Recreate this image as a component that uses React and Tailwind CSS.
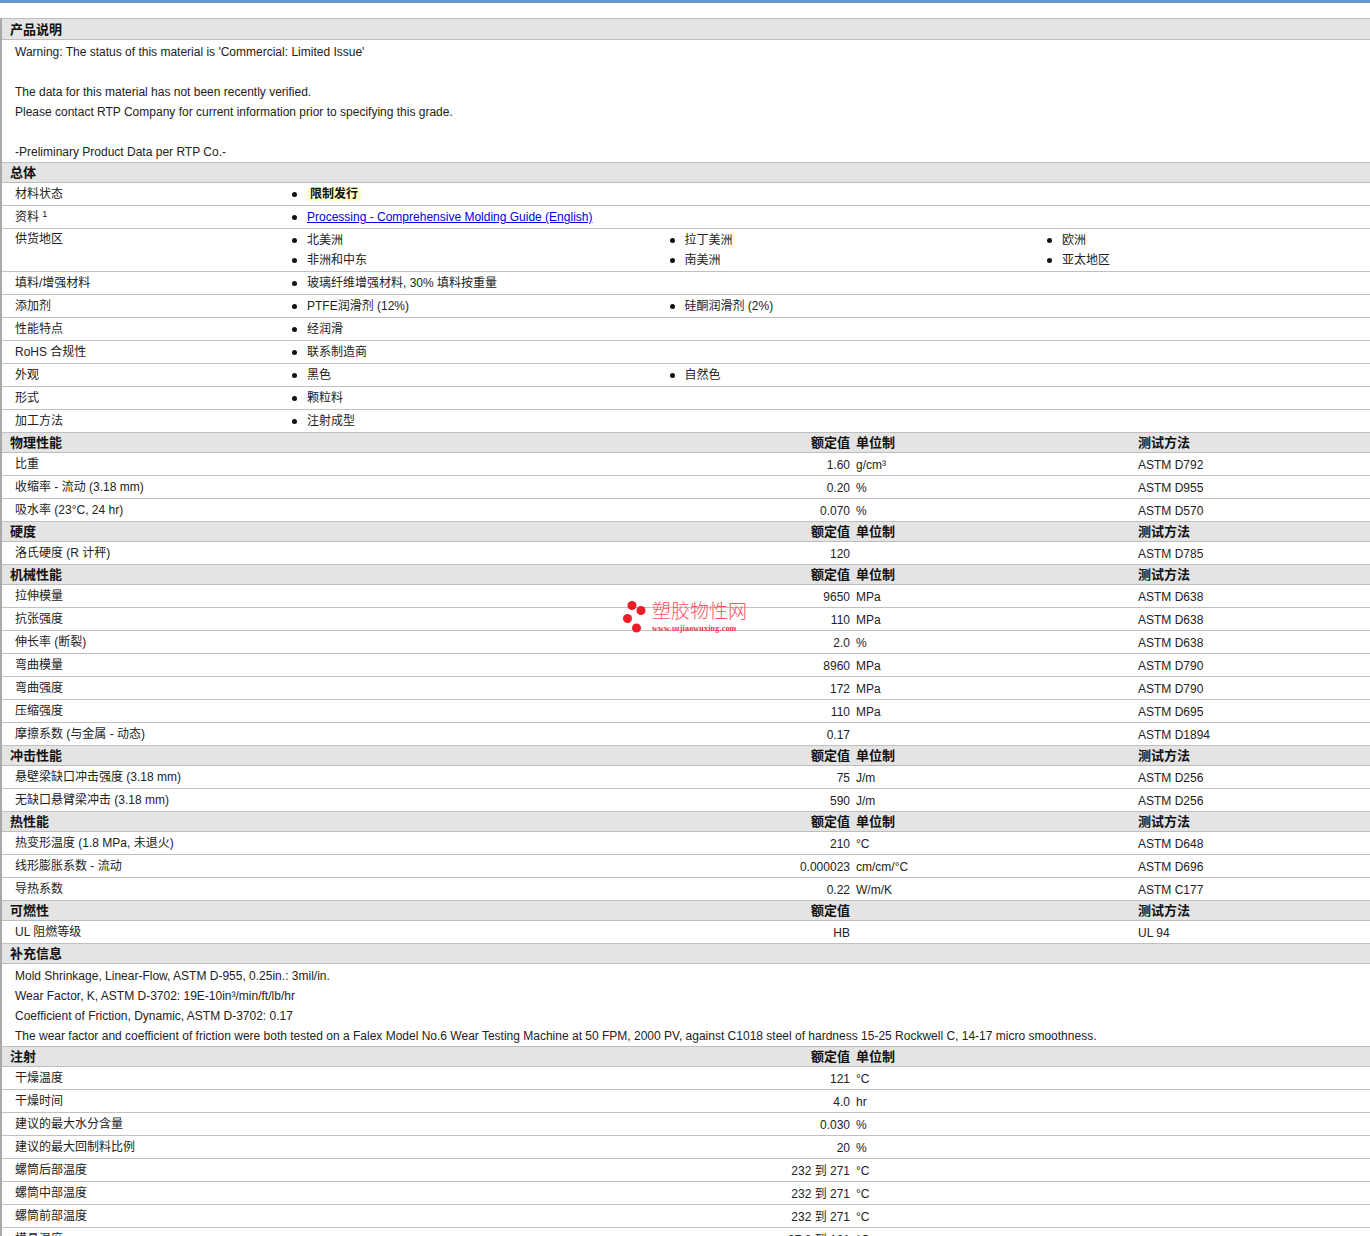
const FONT = "font-['Liberation_Sans','Noto_Sans_CJK_SC',sans-serif]";

function Header({ title, rated, unit, method, first }) {
  return (
    <div className={`relative flex h-[20px] items-center border-b border-[#bdbdbd] bg-[#e5e4e4] ${first ? "mt-[15px] box-content border-t" : ""}`}>
      <div className="w-[600px] pl-[8px] text-[13px] font-bold leading-none text-[#111]">{title}</div>
      <div className="w-[248px] text-right text-[13px] font-bold leading-none text-[#111]">{rated}</div>
      <div className="ml-[6px] w-[282px] text-[13px] font-bold leading-none text-[#111]">{unit}</div>
      <div className="text-[13px] font-bold leading-none text-[#111]">{method}</div>
    </div>
  );
}

function Data({ label, value, unit, method }) {
  return (
    <div className="flex h-[23px] items-center border-b border-[#c0c0c0] text-[12px] text-[#222]">
      <div className="w-[600px] pl-[13px]">{label}</div>
      <div className="w-[248px] pt-[2px] text-right">{value}</div>
      <div className="ml-[6px] w-[282px] whitespace-nowrap pt-[2px]">{unit}</div>
      <div className="pt-[2px]">{method}</div>
    </div>
  );
}

function Bullet({ children }) {
  return (
    <div className="flex w-[377.5px] items-center">
      <span className="mr-[10px] h-[5px] w-[5px] rounded-full bg-[#111]" />
      <span>{children}</span>
    </div>
  );
}

function Attr({ label, rows, tall }) {
  return (
    <div className={`flex border-b border-[#c0c0c0] text-[12px] text-[#222] ${tall ? "h-[43px] pt-[1px]" : "h-[23px] items-center"}`}>
      <div className="w-[290px] shrink-0 pl-[13px]">{label}</div>
      <div className="flex flex-col">
        {rows.map((r, i) => (
          <div key={i} className="flex h-[20px] items-center">
            {r.map((c, j) => (
              <Bullet key={j}>{c}</Bullet>
            ))}
          </div>
        ))}
      </div>
    </div>
  );
}

function TextBlock({ lines, top }) {
  return (
    <div className="border-b border-[#c0c0c0] pl-[13px] pt-[2px] text-[12px] leading-[20px] text-[#222]">
      {lines.map((l, i) => (
        <div key={i} className="h-[20px] whitespace-nowrap">{l}</div>
      ))}
    </div>
  );
}

const H = { rated: "额定值", unit: "单位制", method: "测试方法" };

export default function App() {
  return (
    <div className={`relative h-[1236px] w-[1370px] overflow-hidden bg-white ${FONT}`}>
      <div className="h-[3px] bg-[#6699cc]" />
      <div className="border-l-2 border-[#a9a9a9]">
        <Header first title="产品说明" />
        <TextBlock
          lines={[
            "Warning: The status of this material is 'Commercial: Limited Issue'",
            "",
            "The data for this material has not been recently verified.",
            "Please contact RTP Company for current information prior to specifying this grade.",
            "",
            "-Preliminary Product Data per RTP Co.-",
          ]}
        />
        <Header title="总体" />
        <Attr label="材料状态" rows={[[<span className="bg-[#ffffcc] px-[3px] font-bold text-[#111]">限制发行</span>]]} />
        <Attr
          label={<span>资料 <sup className="text-[9px]">1</sup></span>}
          rows={[[<a className="text-[#0000ee] underline">Processing - Comprehensive Molding Guide (English)</a>]]}
        />
        <Attr tall label="供货地区" rows={[["北美洲", "拉丁美洲", "欧洲"], ["非洲和中东", "南美洲", "亚太地区"]]} />
        <Attr label="填料/增强材料" rows={[["玻璃纤维增强材料, 30% 填料按重量"]]} />
        <Attr label="添加剂" rows={[["PTFE润滑剂 (12%)", "硅酮润滑剂 (2%)"]]} />
        <Attr label="性能特点" rows={[["经润滑"]]} />
        <Attr label="RoHS 合规性" rows={[["联系制造商"]]} />
        <Attr label="外观" rows={[["黑色", "自然色"]]} />
        <Attr label="形式" rows={[["颗粒料"]]} />
        <Attr label="加工方法" rows={[["注射成型"]]} />

        <Header title="物理性能" {...H} />
        <Data label="比重" value="1.60" unit="g/cm³" method="ASTM D792" />
        <Data label="收缩率 - 流动 (3.18 mm)" value="0.20" unit="%" method="ASTM D955" />
        <Data label="吸水率 (23°C, 24 hr)" value="0.070" unit="%" method="ASTM D570" />

        <Header title="硬度" {...H} />
        <Data label="洛氏硬度 (R 计秤)" value="120" method="ASTM D785" />

        <Header title="机械性能" {...H} />
        <Data label="拉伸模量" value="9650" unit="MPa" method="ASTM D638" />
        <Data label="抗张强度" value="110" unit="MPa" method="ASTM D638" />
        <Data label="伸长率 (断裂)" value="2.0" unit="%" method="ASTM D638" />
        <Data label="弯曲模量" value="8960" unit="MPa" method="ASTM D790" />
        <Data label="弯曲强度" value="172" unit="MPa" method="ASTM D790" />
        <Data label="压缩强度" value="110" unit="MPa" method="ASTM D695" />
        <Data label="摩擦系数 (与金属 - 动态)" value="0.17" method="ASTM D1894" />

        <Header title="冲击性能" {...H} />
        <Data label="悬壁梁缺口冲击强度 (3.18 mm)" value="75" unit="J/m" method="ASTM D256" />
        <Data label="无缺口悬臂梁冲击 (3.18 mm)" value="590" unit="J/m" method="ASTM D256" />

        <Header title="热性能" {...H} />
        <Data label="热变形温度 (1.8 MPa, 未退火)" value="210" unit="°C" method="ASTM D648" />
        <Data label="线形膨胀系数 - 流动" value="0.000023" unit="cm/cm/°C" method="ASTM D696" />
        <Data label="导热系数" value="0.22" unit="W/m/K" method="ASTM C177" />

        <Header title="可燃性" rated="额定值" method="测试方法" />
        <Data label="UL 阻燃等级" value="HB" method="UL 94" />

        <Header title="补充信息" />
        <TextBlock
          lines={[
            "Mold Shrinkage, Linear-Flow, ASTM D-955, 0.25in.: 3mil/in.",
            "Wear Factor, K, ASTM D-3702: 19E-10in³/min/ft/lb/hr",
            "Coefficient of Friction, Dynamic, ASTM D-3702: 0.17",
            "The wear factor and coefficient of friction were both tested on a Falex Model No.6 Wear Testing Machine at 50 FPM, 2000 PV, against C1018 steel of hardness 15-25 Rockwell C, 14-17 micro smoothness.",
          ]}
        />
        <Header title="注射" rated="额定值" unit="单位制" />
        <Data label="干燥温度" value="121" unit="°C" />
        <Data label="干燥时间" value="4.0" unit="hr" />
        <Data label="建议的最大水分含量" value="0.030" unit="%" />
        <Data label="建议的最大回制料比例" value="20" unit="%" />
        <Data label="螺筒后部温度" value="232 到  271" unit="°C" />
        <Data label="螺筒中部温度" value="232 到  271" unit="°C" />
        <Data label="螺筒前部温度" value="232 到  271" unit="°C" />
        <Data label="模具温度" value="37.8 到  121" unit="°C" />
      </div>

      <div className="absolute left-[622px] top-[600px] flex items-start">
        <svg width="26" height="34" viewBox="0 0 26 34" className="mr-[4px]">
          <circle cx="10" cy="5.5" r="4.5" fill="#ee1c25" />
          <circle cx="19" cy="10.5" r="4.5" fill="#ee1c25" />
          <circle cx="5.5" cy="18.5" r="4.5" fill="#ee1c25" />
          <circle cx="14.5" cy="28" r="4.5" fill="#ee1c25" />
        </svg>
        <div className="flex flex-col">
          <span className="text-[19px] font-light leading-[24px] text-[#f2545b]">塑胶物性网</span>
          <span className="font-['Liberation_Serif',serif] text-[8px] font-bold leading-[9px] tracking-[0.2px] text-[#ee3038]">www.sujiaowuxing.com</span>
        </div>
      </div>
    </div>
  );
}
